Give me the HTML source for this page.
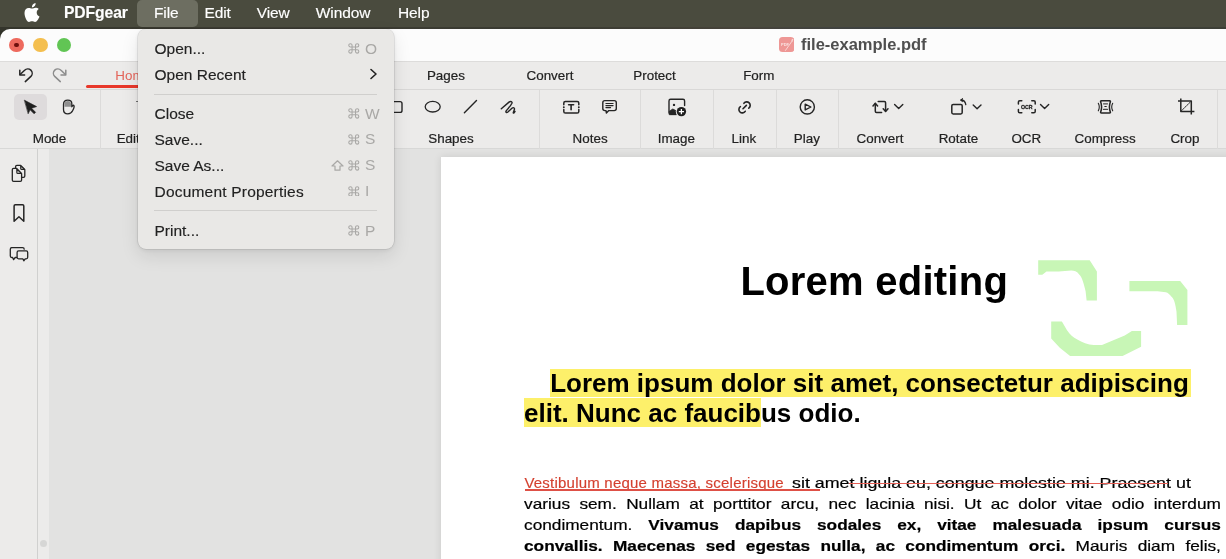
<!DOCTYPE html>
<html><head><meta charset="utf-8">
<style>
*{margin:0;padding:0;box-sizing:border-box}
html,body{width:1226px;height:559px;overflow:hidden;will-change:transform;background:#2f3027;font-family:"Liberation Sans",sans-serif}
.a{position:absolute}
#wall{left:0;top:0;width:1226px;height:31px;background:linear-gradient(90deg,#34352c 0,#3d3c33 20%,#393a31 45%,#46433a 60%,#3c4244 75%,#3d3f36 100%)}
#menubar{left:0;top:0;width:1226px;height:27px;background:#4a4b3e;color:#fff;font-size:15.5px;letter-spacing:-0.1px}
#menubar span{position:absolute;top:4.8px;line-height:15.5px;-webkit-text-stroke:0.15px #fff;white-space:nowrap}
#filehl{left:136.5px;top:0;width:61px;height:27px;border-radius:5px;background:#6d6e61}
#title{left:0;top:29px;width:1226px;height:33px;background:#fcfcfc;border-radius:10px 0 0 0;border-bottom:1px solid #dddcdb}
.tl{position:absolute;top:8.8px;width:14.4px;height:14.4px;border-radius:50%}
#tabs{left:0;top:62px;width:1226px;height:28px;background:#ecebea;border-bottom:1px solid #d9d8d7}
#tools{left:0;top:90px;width:1226px;height:59px;background:#ecebea;border-bottom:1px solid #d8d8d7}
.lbl{position:absolute;top:131.5px;font-size:13.4px;line-height:13px;color:#222;-webkit-text-stroke:0.2px #222;white-space:nowrap;transform:translateX(-50%)}
.tab{position:absolute;top:69px;font-size:13.4px;line-height:13px;color:#222;-webkit-text-stroke:0.2px #222;white-space:nowrap;transform:translateX(-50%)}
.sep{position:absolute;top:90px;width:1px;height:59px;background:#dcdbda}
#side{left:0;top:149px;width:38px;height:410px;background:#ecebea;border-right:1px solid #d0d0cf}
#strip{left:38px;top:149px;width:11px;height:410px;background:#ecebea}
#canvas{left:49px;top:149px;width:1177px;height:410px;background:#e2e2e1}
#page{left:441px;top:157px;width:800px;height:420px;background:#fff;box-shadow:0 0 8px rgba(0,0,0,.11)}
#menu{left:137.5px;top:29px;width:256px;height:220px;background:#e9e8e6;border-radius:8px;box-shadow:0 0 0 0.6px rgba(0,0,0,.12),0 1px 4px rgba(0,0,0,.07),0 7px 18px rgba(0,0,0,.10);color:#222;font-size:15.5px;letter-spacing:0px}
#menu .it{position:absolute;left:17px;line-height:15.5px;-webkit-text-stroke:0.15px #222;white-space:nowrap}
#menu .sc{position:absolute;line-height:15.5px;color:#a9a8a6;white-space:nowrap}
#menu .hr{position:absolute;left:16.5px;width:223px;height:1px;background:#d0cfcd}
.txt{position:absolute;white-space:nowrap;color:#000}
.pl{left:524.4px;width:606px;font-size:15px;line-height:15px;-webkit-text-stroke:0.2px #000;text-align:justify;text-align-last:justify;color:#000;white-space:nowrap;transform-origin:0 0;transform:scaleX(1.15)}
</style></head><body>
<div id="wall" class="a"></div>
<div id="menubar" class="a">
  <div id="filehl" class="a"></div>
  <svg class="a" style="left:24px;top:3px" width="16" height="19" viewBox="0 0 16 19"><path fill="#fff" d="M8,5.6 C6.9,5.6 6,4.9 4.6,4.9 C2.5,4.9 0.5,6.6 0.5,9.9 C0.5,13.6 3,19 5,19 C6,19 6.6,18.3 8,18.3 C9.4,18.3 9.8,19 11.1,19 C12.9,19 14.7,15.9 15.5,13.6 C13.7,12.8 12.7,11.3 12.7,9.5 C12.7,7.9 13.5,6.7 14.7,5.9 C13.8,4.9 12.5,4.7 11.6,4.7 C10.2,4.7 9.2,5.6 8,5.6 Z M7.9,4.5 C7.6,2.4 9.4,0.3 11.6,0 C11.9,2.3 10.2,4.4 7.9,4.5 Z"/></svg>
  <span style="left:64px;font-weight:bold;font-size:15.7px">PDFgear</span>
  <span style="left:154px">File</span>
  <span style="left:204.5px">Edit</span>
  <span style="left:256.8px">View</span>
  <span style="left:315.8px">Window</span>
  <span style="left:398px">Help</span>
</div>

<div id="title" class="a">
  <div class="tl" style="left:9.4px;background:#ee6a5e"><div class="a" style="left:4.9px;top:4.9px;width:4.6px;height:4.6px;border-radius:50%;background:#6e100c"></div></div>
  <div class="tl" style="left:33.2px;background:#f4bf4f"></div>
  <div class="tl" style="left:56.8px;background:#61c554"></div>
  <svg class="a" style="left:778.8px;top:7.6px" width="15.4" height="15" viewBox="0 0 15.4 15"><rect x="0" y="0" width="15.4" height="15" rx="3.6" fill="#ee9795"/><text x="2" y="8.7" font-family="Liberation Sans" font-weight="bold" font-size="4" fill="#fbe4e3">PDF</text><path d="M6.2,13.8 L13.6,3.4 Q14.6,2 13.2,2.4 Q12.4,3.4 13.4,4.4" fill="none" stroke="#fbe4e3" stroke-width="0.8"/></svg>
  <div class="a" style="left:801px;top:7px;font-size:16.5px;line-height:16.5px;font-weight:bold;color:#4f4f4f;white-space:nowrap">file-example.pdf</div>
</div>

<div id="tabs" class="a"></div>
<div class="a" style="left:115.3px;top:69px;font-size:13.4px;line-height:13px;color:#e4645a">Home</div>
<div class="a" style="left:86px;top:85px;width:80px;height:3px;background:#e8382b;border-radius:2px 0 0 2px"></div>
<div class="tab" style="left:445.9px">Pages</div>
<div class="tab" style="left:550px">Convert</div>
<div class="tab" style="left:654.5px">Protect</div>
<div class="tab" style="left:758.8px">Form</div>

<div id="tools" class="a"></div>
<div class="a" style="left:14.3px;top:94px;width:32.6px;height:25.8px;border-radius:5px;background:#dedbdc"></div>
<div class="sep" style="left:100px"></div>
<div class="a" style="left:136.1px;top:100.6px;width:1.9px;height:1.9px;background:#5f5f5f;border-radius:0.5px"></div>
<div class="sep" style="left:539px"></div>
<div class="sep" style="left:640px"></div>
<div class="sep" style="left:713px"></div>
<div class="sep" style="left:775.5px"></div>
<div class="sep" style="left:838px"></div>
<div class="sep" style="left:1217px"></div>

<div class="lbl" style="left:49.5px">Mode</div>
<div class="a" style="left:116.7px;top:131.5px;font-size:13.4px;line-height:13px;color:#222;-webkit-text-stroke:0.2px #222">Edit</div>
<div class="lbl" style="left:451px">Shapes</div>
<div class="lbl" style="left:590.1px">Notes</div>
<div class="lbl" style="left:676.3px">Image</div>
<div class="lbl" style="left:743.9px">Link</div>
<div class="lbl" style="left:806.9px">Play</div>
<div class="lbl" style="left:880px">Convert</div>
<div class="lbl" style="left:958.4px">Rotate</div>
<div class="lbl" style="left:1026.3px">OCR</div>
<div class="lbl" style="left:1105.1px">Compress</div>
<div class="lbl" style="left:1184.9px">Crop</div>



<div id="side" class="a"></div>
<div id="strip" class="a"><div class="a" style="left:1.8px;top:390.8px;width:7px;height:7px;border-radius:50%;background:#d6d6d5"></div></div>
<div id="canvas" class="a"></div>
<div id="page" class="a"></div>
<!-- ICONS -->
<svg class="a" style="left:0;top:0" width="1226" height="270" viewBox="0 0 1226 270" fill="none" stroke="#252525" stroke-width="1.4" stroke-linecap="round" stroke-linejoin="round">
  <!-- undo -->
  <path d="M20.4,74.2 L24.6,70.2 A4.4,4.4 0 0 1 30.9,76.4 L25.3,81.6" stroke-width="1.5"/>
  <path d="M19.8,70.2 L19.8,75 L24.6,75" stroke-width="1.5"/>
  <!-- redo -->
  <g stroke="#8c8c8c" transform="translate(85.6,0) scale(-1,1)">
    <path d="M20.4,74.2 L24.6,70.2 A4.4,4.4 0 0 1 30.9,76.4 L25.3,81.6" stroke-width="1.5"/>
    <path d="M19.8,70.2 L19.8,75 L24.6,75" stroke-width="1.5"/>
  </g>
  <!-- cursor -->
  <path d="M24.6,100.3 L36.6,106.6 L31.6,108.3 L35.6,112.3 L34.1,113.8 L30.1,109.8 L28.3,113.5 Z" fill="#1e1e1e" stroke="#1e1e1e" stroke-width="0.6"/>
  <!-- hand -->
  <path d="M64.5,104 C64.5,102 66,100.9 67.8,100.9 C69.6,100.9 71,102 71,103.8 L71,106.8 L64.5,106.8 Z" fill="#8e8e8e" stroke="none"/>
  <path d="M63.5,104.5 C63.5,101.7 65.5,100.1 67.8,100.1 C70.2,100.1 71.8,101.5 71.8,103.5 L71.8,106.8 C72.5,105.3 73.6,104.9 74,105.7 C74.4,106.7 73.6,109 72.6,110.8 C71.6,112.8 70,113.8 67.8,113.8 C65.2,113.8 63.5,112 63.5,109.5 Z" stroke-width="1.3"/>
  <!-- shapes: ellipse, line, freehand -->
  <ellipse cx="432.7" cy="106.7" rx="7.5" ry="5.3" stroke-width="1.3"/>
  <path d="M464.4,112.8 L476.5,100.5" stroke-width="1.4"/>
  <path d="M501.3,108.8 L509,102.1 C510.6,100.8 512.6,101.6 511.9,103.3 C510.7,106 507.6,109 506.1,111 C505.3,112.4 506.6,113 507.9,112 L511.9,108.2 C513.3,107 514.9,107.8 514.4,109.5 C514.1,110.8 512.9,112.5 513.3,113 C513.7,113.3 514.6,112.3 515,111.5" stroke-width="1.4"/>
  <!-- rect partially visible -->
  <path d="M394,101.6 L400,101.6 Q402,101.6 402,103.6 L402,110.4 Q402,112.4 400,112.4 L394,112.4" stroke-width="1.4"/>
  <!-- textbox -->
  <path d="M563.8,104.8 L563.8,103 Q563.8,101.4 565.4,101.4 L577.2,101.4 Q578.8,101.4 578.8,103 L578.8,104.8" stroke-width="1.5"/>
  <path d="M563.8,109.6 L563.8,111.5 Q563.8,113.1 565.4,113.1 L577.2,113.1 Q578.8,113.1 578.8,111.5 L578.8,109.6" stroke-width="1.5"/>
  <circle cx="563.8" cy="107.2" r="0.95" fill="#252525" stroke="none"/>
  <circle cx="578.8" cy="107.2" r="0.95" fill="#252525" stroke="none"/>
  <path d="M568.6,104.7 L573.6,104.7 M571.1,104.7 L571.1,109.8" stroke-width="1.6"/>
  <!-- comment -->
  <path d="M604.9,100.6 L614.2,100.6 Q616.3,100.6 616.3,102.7 L616.3,108.5 Q616.3,110.6 614.2,110.6 L608.8,110.6 L606.4,113.1 L606,110.6 L604.9,110.6 Q602.8,110.6 602.8,108.5 L602.8,102.7 Q602.8,100.6 604.9,100.6 Z" stroke-width="1.4"/>
  <path d="M605.9,103.5 L613.1,103.5 M605.9,105.6 L613.1,105.6 M605.9,107.6 L610.6,107.6" stroke-width="1.1"/>
  <!-- image -->
  <path d="M684.6,105.6 L684.6,100.9 Q684.6,99.3 683,99.3 L670.6,99.3 Q669,99.3 669,100.9 L669,112.6 Q669,114.2 670.6,114.2 L676,114.2" stroke-width="1.4"/>
  <circle cx="674" cy="104.9" r="1.2" fill="#252525" stroke="none"/>
  <path d="M669.3,114.3 L669.3,111.2 L672.8,109 L676.6,111 L676.6,114.3 Z" fill="#252525" stroke="#252525" stroke-width="0.8"/>
  <circle cx="681.4" cy="111.6" r="5.6" fill="#ecebea" stroke="none"/>
  <circle cx="681.4" cy="111.6" r="4.7" fill="#1f1f1f" stroke="none"/>
  <path d="M681.4,109 L681.4,114.2 M678.8,111.6 L684,111.6" stroke="#fff" stroke-width="1.3" stroke-linecap="butt"/>
  <!-- link -->
  <path d="M740.4,106.7 A3.4,3.4 0 1 0 745.2,111.3" stroke-width="1.6"/>
  <path d="M743.9,103.3 A3.5,3.5 0 1 1 748.8,108.2" stroke-width="1.6"/>
  <path d="M743,108.7 L746.4,105.4" stroke-width="1.6"/>
  <!-- play -->
  <circle cx="807.3" cy="106.9" r="7.1" stroke-width="1.4"/>
  <path d="M805.2,104.1 L810.9,107 L805.2,109.9 Z" stroke-width="1.4"/>
  <!-- convert -->
  <path d="M875.3,103.6 L875.3,111.2 Q875.3,112.4 876.5,112.4 L881.6,112.4" stroke-width="1.5"/>
  <path d="M873,105.9 L875.3,103.2 L877.6,105.9" stroke-width="1.5"/>
  <path d="M878.2,101.5 L884.4,101.5 Q885.6,101.5 885.6,102.7 L885.6,111" stroke-width="1.5"/>
  <path d="M883.2,108.8 L885.6,111.5 L888,108.8" stroke-width="1.5"/>
  <path d="M894.6,104.5 L898.7,108.6 L902.8,104.5" stroke-width="1.4"/>
  <!-- rotate -->
  <rect x="951.8" y="104.4" width="10.4" height="9.6" rx="1.4" stroke-width="1.5"/>
  <path d="M961.5,100 Q965.2,100.6 965.8,104.6" stroke-width="1.3"/>
  <path d="M962.6,98.6 L960.4,100.1 L962.5,101.6" fill="#252525" stroke-width="1"/>
  <path d="M973.2,104.9 L977.1,108.7 L981,104.9" stroke-width="1.4"/>
  <!-- ocr -->
  <path d="M1018.4,104 L1018.4,102.1 Q1018.4,100.7 1019.8,100.7 L1021.8,100.7 M1031.8,100.7 L1033.8,100.7 Q1035.2,100.7 1035.2,102.1 L1035.2,104 M1035.2,109.6 L1035.2,111.4 Q1035.2,112.8 1033.8,112.8 L1031.8,112.8 M1021.8,112.8 L1019.8,112.8 Q1018.4,112.8 1018.4,111.4 L1018.4,109.6" stroke-width="1.5"/>
  <text x="1021" y="108.9" font-family="Liberation Sans" font-weight="bold" font-size="5.9" fill="#252525" stroke="#252525" stroke-width="0.3" textLength="11.6" lengthAdjust="spacingAndGlyphs">OCR</text>
  <path d="M1040.5,104.5 L1044.6,108.6 L1048.7,104.5" stroke-width="1.4"/>
  <!-- compress -->
  <path d="M1101.4,100.8 L1109.6,100.8 Q1110.6,100.8 1110.4,101.8 Q1108.4,107 1110.4,112.2 Q1110.6,113.1 1109.6,113.1 L1101.4,113.1 Q1100.4,113.1 1100.6,112.2 Q1102.6,107 1100.6,101.8 Q1100.4,100.8 1101.4,100.8 Z" stroke-width="1.5"/>
  <path d="M1098.3,103.3 Q1100.3,107 1098.3,110.8 M1112.7,103.3 Q1110.7,107 1112.7,110.8" stroke-width="1.1"/>
  <path d="M1103.5,103.8 L1107.5,103.8 M1103.5,109.4 L1107.5,109.4" stroke="#4a4a4a" stroke-width="1.2"/>
  <path d="M1104.8,106.5 L1106.3,106.5" stroke-width="1"/>
  <!-- crop -->
  <path d="M1180.8,98.4 L1180.8,111.4 L1194.4,111.4 M1178,101.1 L1191.3,101.1 L1191.3,114.4" stroke-width="1.5" stroke-linecap="butt"/>
  <path d="M1181.4,110.8 L1191,101.4" stroke-width="1" stroke-dasharray="1.6 1.1"/>
  <!-- sidebar: pages -->
  <path d="M15.6,168.4 L15.6,166.6 Q15.6,165.3 16.9,165.3 L20.3,165.3 L24.8,169.8 L24.8,176 Q24.8,177.3 23.5,177.3 L21.8,177.3" stroke-width="1.3"/>
  <path d="M20.7,165.6 L20.7,168.4 Q20.7,169.5 21.8,169.5 L24.6,169.5 Z" fill="#b0b0b0" stroke-width="1.1"/>
  <path d="M13.6,168.4 L16.4,168.4 L21.6,173.6 L21.6,180 Q21.6,181.3 20.3,181.3 L13.6,181.3 Q12.3,181.3 12.3,180 L12.3,169.7 Q12.3,168.4 13.6,168.4 Z" fill="#ecebea" stroke-width="1.3"/>
  <path d="M16.8,168.7 L16.8,172.4 Q16.8,173.5 17.9,173.5 L21.4,173.5 Z" fill="#b0b0b0" stroke-width="1.1"/>
  <!-- bookmark -->
  <path d="M14.1,206 Q14.1,204.8 15.3,204.8 L22.6,204.8 Q23.8,204.8 23.8,206 L23.8,221.2 L18.95,216.8 L14.1,221.2 Z" stroke-width="1.5"/>
  <!-- comments -->
  <path d="M11.8,247.6 L22.6,247.6 Q24.2,247.6 24.2,249.2" stroke-width="1.3"/>
  <path d="M11.8,247.6 Q10.3,247.6 10.3,249.2 L10.3,256 Q10.3,257.5 11.8,257.5 L12.6,257.5 L13.6,259.6 L15.2,257.5 L16.6,257.5" stroke-width="1.3"/>
  <path d="M18.6,250.9 L26.2,250.9 Q27.7,250.9 27.7,252.4 L27.7,257.3 Q27.7,258.8 26.2,258.8 L25.2,258.8 L23.8,260.8 L22.8,258.8 L18.6,258.8 Q17.1,258.8 17.1,257.3 L17.1,252.4 Q17.1,250.9 18.6,250.9 Z" stroke-width="1.3"/>
</svg>

<!-- page content -->
<div class="txt" style="left:740.4px;top:260.9px;font-size:40px;line-height:40px;font-weight:bold;letter-spacing:0.25px">Lorem editing</div>
<svg class="a" style="left:1030px;top:250px" width="170" height="115" viewBox="1030 250 170 115"><g fill="#c8f6b6">
  <path d="M1038.2,260.3 L1089.7,260.3 L1096.9,271.6 L1096.9,300.4 L1086.6,300.4 L1085.6,291.2 C1084,284 1082,277 1079.4,274.7 C1077,271.5 1074,270.6 1071.2,270.6 L1058.8,271.6 L1046.5,271.6 L1042.3,274.7 L1038.2,274.7 Z"/>
  <path d="M1129.4,280.9 L1180.2,280.9 L1187.4,290.1 L1187.4,325.1 L1177.1,325.1 L1176.5,311.7 C1175.5,304 1174,299 1172,297.3 C1170,294.5 1168,292.6 1165.8,292.2 L1157.6,291.2 L1129.4,291.2 Z"/>
  <path d="M1051.2,321.4 L1061.9,321.4 L1067,330.3 C1070,334.5 1073,337.5 1077.3,339.5 C1082,342.5 1088,344.5 1093.8,345.1 L1102,345.1 L1124.7,335.4 L1131.9,330.9 L1141.1,330.9 L1141.1,346.7 L1122.6,356 L1070.1,356 L1059.8,347.8 L1051.2,338.5 Z"/>
</g></svg>
<div class="a" style="left:550.2px;top:369.2px;width:640.5px;height:28.2px;background:#fdf06a"></div>
<div class="a" style="left:524.1px;top:398.4px;width:236.9px;height:28.4px;background:#fdf06a"></div>
<div class="txt" style="left:550.2px;top:370.3px;font-size:26px;line-height:26px;font-weight:bold">Lorem ipsum dolor sit amet, consectetur adipiscing</div>
<div class="txt" style="left:524px;top:400px;font-size:26px;line-height:26px;font-weight:bold">elit. Nunc ac faucibus odio.</div>

<div class="txt" style="left:524.4px;top:475.3px;font-size:15px;line-height:15px;color:#d4402f;-webkit-text-stroke:0.15px #d4402f;letter-spacing:0.22px">Vestibulum neque massa, scelerisque</div>
<div class="a" style="left:525px;top:489.2px;width:295px;height:1.4px;background:#de5046"></div>
<div class="txt" style="left:791.6px;top:475.3px;font-size:15px;line-height:15px;-webkit-text-stroke:0.2px #000;transform-origin:0 0;transform:scaleX(1.19)">sit amet ligula eu, congue molestie mi. Praesent ut</div>
<div class="a" style="left:848.5px;top:482.6px;width:319px;height:1.4px;background:#e65f55"></div>
<div class="a pl" style="top:496px">varius sem. Nullam at porttitor arcu, nec lacinia nisi. Ut ac dolor vitae odio interdum</div>
<div class="a pl" style="top:516.6px">condimentum. <b>Vivamus dapibus sodales ex, vitae malesuada ipsum cursus</b></div>
<div class="a pl" style="top:537.7px"><b>convallis. Maecenas sed egestas nulla, ac condimentum orci.</b> Mauris diam felis,</div>

<div id="menu" class="a">
  <div class="it" style="top:12.3px">Open...</div>
  <div class="it" style="top:38.1px">Open Recent</div>
  <svg class="a" style="left:231px;top:39px" width="10" height="12" viewBox="0 0 10 12"><path d="M2,1.5 L7,6 L2,10.5" fill="none" stroke="#222" stroke-width="1.6" stroke-linecap="round" stroke-linejoin="round"/></svg>
  <div class="hr" style="top:64.5px"></div>
  <div class="it" style="top:77.4px">Close</div>
  <div class="it" style="top:103.2px">Save...</div>
  <div class="it" style="top:129.1px">Save As...</div>
  <div class="it" style="top:155px;letter-spacing:0.2px">Document Properties</div>
  <div class="hr" style="top:181px"></div>
<svg class="a" style="left:210.5px;top:14.0px" width="11.6" height="10.8" viewBox="0 0 12 11.2"><path d="M4.2,3.9 L4.2,2.4 A1.7,1.7 0 1 0 2.5,4.1 L9.5,4.1 A1.7,1.7 0 1 0 7.8,2.4 L7.8,8.8 A1.7,1.7 0 1 0 9.5,7.1 L2.5,7.1 A1.7,1.7 0 1 0 4.2,8.8 Z" fill="none" stroke="#a9a8a6" stroke-width="1.1"/></svg><div class="sc" style="left:227.5px;top:11.5px">O</div>
<svg class="a" style="left:210.5px;top:79.1px" width="11.6" height="10.8" viewBox="0 0 12 11.2"><path d="M4.2,3.9 L4.2,2.4 A1.7,1.7 0 1 0 2.5,4.1 L9.5,4.1 A1.7,1.7 0 1 0 7.8,2.4 L7.8,8.8 A1.7,1.7 0 1 0 9.5,7.1 L2.5,7.1 A1.7,1.7 0 1 0 4.2,8.8 Z" fill="none" stroke="#a9a8a6" stroke-width="1.1"/></svg><div class="sc" style="left:227.5px;top:76.6px">W</div>
<svg class="a" style="left:210.5px;top:104.9px" width="11.6" height="10.8" viewBox="0 0 12 11.2"><path d="M4.2,3.9 L4.2,2.4 A1.7,1.7 0 1 0 2.5,4.1 L9.5,4.1 A1.7,1.7 0 1 0 7.8,2.4 L7.8,8.8 A1.7,1.7 0 1 0 9.5,7.1 L2.5,7.1 A1.7,1.7 0 1 0 4.2,8.8 Z" fill="none" stroke="#a9a8a6" stroke-width="1.1"/></svg><div class="sc" style="left:227.5px;top:102.4px">S</div>
<svg class="a" style="left:210.5px;top:130.8px" width="11.6" height="10.8" viewBox="0 0 12 11.2"><path d="M4.2,3.9 L4.2,2.4 A1.7,1.7 0 1 0 2.5,4.1 L9.5,4.1 A1.7,1.7 0 1 0 7.8,2.4 L7.8,8.8 A1.7,1.7 0 1 0 9.5,7.1 L2.5,7.1 A1.7,1.7 0 1 0 4.2,8.8 Z" fill="none" stroke="#a9a8a6" stroke-width="1.1"/></svg><div class="sc" style="left:227.5px;top:128.3px">S</div>
<svg class="a" style="left:210.5px;top:156.7px" width="11.6" height="10.8" viewBox="0 0 12 11.2"><path d="M4.2,3.9 L4.2,2.4 A1.7,1.7 0 1 0 2.5,4.1 L9.5,4.1 A1.7,1.7 0 1 0 7.8,2.4 L7.8,8.8 A1.7,1.7 0 1 0 9.5,7.1 L2.5,7.1 A1.7,1.7 0 1 0 4.2,8.8 Z" fill="none" stroke="#a9a8a6" stroke-width="1.1"/></svg><div class="sc" style="left:227.5px;top:154.2px">I</div>
<svg class="a" style="left:210.5px;top:196.0px" width="11.6" height="10.8" viewBox="0 0 12 11.2"><path d="M4.2,3.9 L4.2,2.4 A1.7,1.7 0 1 0 2.5,4.1 L9.5,4.1 A1.7,1.7 0 1 0 7.8,2.4 L7.8,8.8 A1.7,1.7 0 1 0 9.5,7.1 L2.5,7.1 A1.7,1.7 0 1 0 4.2,8.8 Z" fill="none" stroke="#a9a8a6" stroke-width="1.1"/></svg><div class="sc" style="left:227.5px;top:193.5px">P</div>
<svg class="a" style="left:193.5px;top:130.6px" width="13" height="11" viewBox="0 0 13 11"><path d="M6.5,0.8 L12,6 L9,6 L9,10.2 L4,10.2 L4,6 L1,6 Z" fill="none" stroke="#a9a8a6" stroke-width="1.2" stroke-linejoin="round"/></svg>

  <div class="it" style="top:194.3px">Print...</div>
</div>
</body></html>
